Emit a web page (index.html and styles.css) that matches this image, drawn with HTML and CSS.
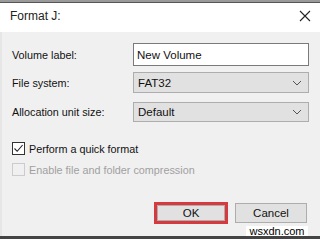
FILE: index.html
```html
<!doctype html>
<html lang="en">
<head>
    <meta charset="UTF-8">
    <title>Format J:</title>
    <link rel="stylesheet" href="styles.css">
</head>
<body>
<div class="top-line"></div>
<div class="dialog">
    <div class="title-bar">
        <span class="title">Format J:</span>
        <svg class="close" width="12" height="12" viewBox="0 0 12 12">
            <path d="M1 1L11 11M11 1L1 11" stroke="#222" stroke-width="1.1" fill="none"/>
        </svg>
    </div>
    <div class="body">
        <div class="row first">
            <span class="label">Volume label:</span>
            <div class="field input">New Volume</div>
        </div>
        <div class="row second">
            <span class="label">File system:</span>
            <div class="field select">FAT32
                <svg class="arrow" width="10" height="6" viewBox="0 0 10 6"><path d="M1 1L5 5L9 1" stroke="#555" fill="none"/></svg>
            </div>
        </div>
        <div class="row third">
            <span class="label">Allocation unit size:</span>
            <div class="field select">Default
                <svg class="arrow" width="10" height="6" viewBox="0 0 10 6"><path d="M1 1L5 5L9 1" stroke="#555" fill="none"/></svg>
            </div>
        </div>
        <div class="checks">
            <div class="check">
                <span class="box checked">
                    <svg width="11" height="11" viewBox="0 0 11 11"><path d="M1.5 5.5L4.2 8.3L9.6 2" stroke="#222" stroke-width="1.1" fill="none"/></svg>
                </span>
                Perform a quick format
            </div>
            <div class="check disabled">
                <span class="box"></span>
                Enable file and folder compression
            </div>
        </div>
        <div class="buttons">
            <div class="ok-wrap"><div class="btn">OK</div></div>
            <div class="btn cancel">Cancel</div>
        </div>
        <div class="mark">wsxdn.com</div>
    </div>
</div>
<div class="bottom-line"></div>
</body>
</html>
```

FILE: styles.css
```css
*{
    margin: 0;
    padding: 0;
    box-sizing: border-box;
}
body{
    width: 320px;
    height: 239px;
    overflow: hidden;
    background: #f0f0f0;
    font-family: "Liberation Sans", Arial, sans-serif;
    font-size: 10.8px;
    color: #111;
}
.top-line{
    height: 3px;
    background: #9a9a9a;
    border-bottom: 1px solid #555;
}
.title-bar{
    height: 29px;
    background: #fff;
    display: flex;
    align-items: center;
    justify-content: space-between;
    padding: 0 9px 0 10px;
}
.title{
    font-size: 12px;
    color: #222;
    margin-top: -3px;
}
.close{
    margin-top: -3px;
}
.body{
    height: 204px;
    padding: 11px 11px 0 10px;
    border-left: 2px solid #e6e6e6;
}
.row{
    display: flex;
    align-items: center;
    justify-content: space-between;
}
.first{
    height: 23px;
    margin-bottom: 6px;
}
.second{
    height: 21px;
    margin-bottom: 9px;
}
.third{
    height: 20px;
}
.field{
    width: 176px;
    height: 100%;
    display: flex;
    align-items: center;
    justify-content: space-between;
    padding: 0 6px 0 3px;
    border: 1px solid #7a7a7a;
    background: #fff;
    font-size: 11.5px;
}
.select{
    background: #e1e1e1;
    border-color: #adadad;
    padding-left: 4px;
}
.checks{
    margin-top: 20px;
}
.check{
    display: flex;
    align-items: center;
    gap: 4px;
    height: 13px;
    margin-bottom: 8px;
}
.check:last-child{
    margin-bottom: 0;
}
.box{
    width: 13px;
    height: 13px;
    border: 1px solid #333;
    background: #fff;
    display: flex;
    align-items: center;
    justify-content: center;
}
.disabled{
    color: #a0a0a0;
}
.disabled .box{
    border-color: #cccccc;
    background: #f0f0f0;
}
.buttons{
    display: flex;
    justify-content: flex-end;
    align-items: center;
    gap: 7px;
    margin-top: 26px;
    padding-right: 2px;
}
.ok-wrap{
    border: 3px solid #d63a3f;
}
.btn{
    width: 68px;
    height: 16px;
    display: flex;
    align-items: center;
    justify-content: center;
    background: #e1e1e1;
    border: 1px solid #adadad;
    color: #111;
    font-size: 11.5px;
}
.cancel{
    width: 72px;
    height: 20px;
}
.mark{
    width: 62px;
    margin-left: auto;
    margin-right: 1px;
    background: #fff;
    color: #000;
    font-size: 11px;
    line-height: 10px;
    text-align: center;
    margin-top: 2px;
}
.bottom-line{
    height: 3px;
    background: #444;
}
```
